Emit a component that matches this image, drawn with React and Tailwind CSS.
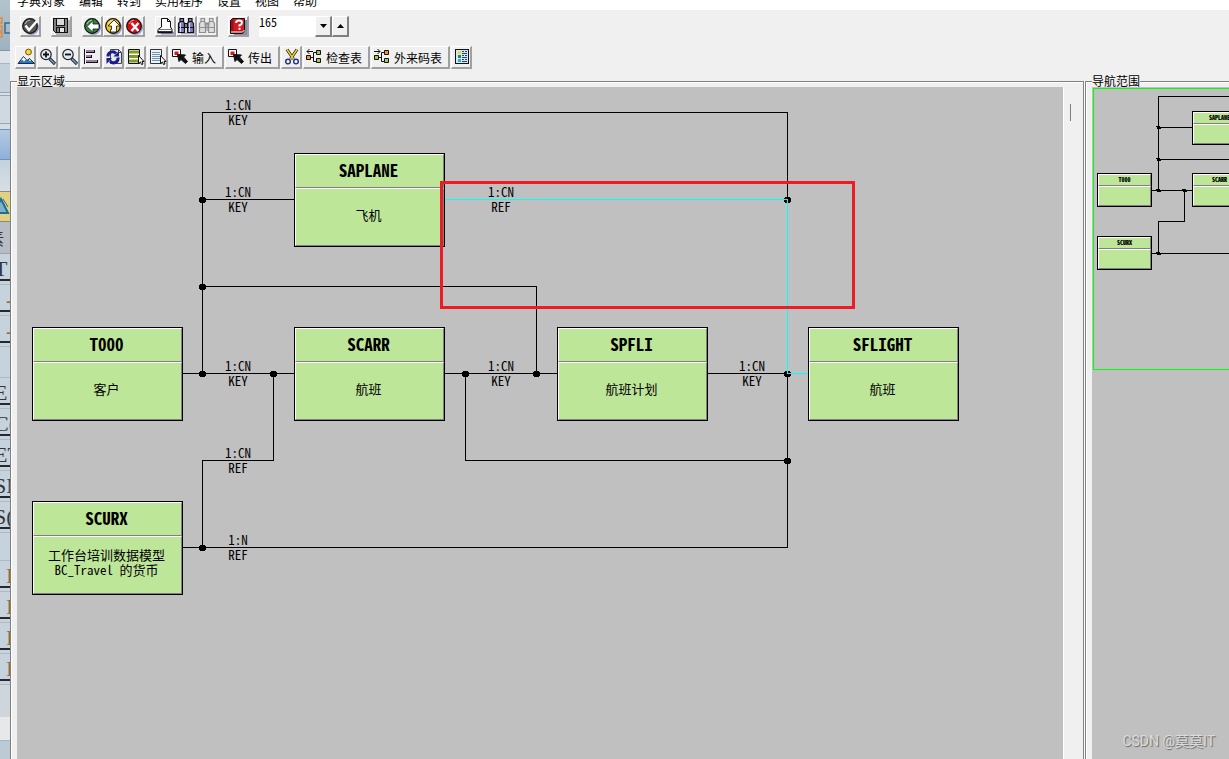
import clsx from "clsx";

const MENU = ["字典对象", "编辑", "转到", "实用程序", "设置", "视图", "帮助"];

const NODES = [
  { name: "SAPLANE", lines: ["飞机"], x: 277, y: 66 },
  { name: "T000", lines: ["客户"], x: 15, y: 240 },
  { name: "SCARR", lines: ["航班"], x: 277, y: 240 },
  { name: "SPFLI", lines: ["航班计划"], x: 540, y: 240 },
  { name: "SFLIGHT", lines: ["航班"], x: 791, y: 240 },
  { name: "SCURX", lines: ["工作台培训数据模型", "BC_Travel 的货币"], x: 15, y: 414 },
];

const LABELS = [
  { top: "1:CN", bottom: "KEY", x: 221, y: 25 },
  { top: "1:CN", bottom: "KEY", x: 221, y: 112 },
  { top: "1:CN", bottom: "REF", x: 484, y: 112 },
  { top: "1:CN", bottom: "KEY", x: 221, y: 286 },
  { top: "1:CN", bottom: "KEY", x: 484, y: 286 },
  { top: "1:CN", bottom: "KEY", x: 735, y: 286 },
  { top: "1:CN", bottom: "REF", x: 221, y: 373 },
  { top: "1:N", bottom: "REF", x: 221, y: 460 },
];

const DOTS = [
  [185, 112],
  [770, 112],
  [185, 199],
  [185, 286],
  [256, 286],
  [448, 286],
  [519, 286],
  [770, 286],
  [770, 373],
  [185, 460],
];

const MAP_NODES = [
  { name: "SAPLANE", x: 98, y: 22 },
  { name: "T000", x: 3, y: 84 },
  { name: "SCARR", x: 98, y: 84 },
  { name: "SCURX", x: 3, y: 147 },
];

const MAP_DOTS = [
  [64, 38],
  [64, 70],
  [64, 101],
  [90, 101],
  [64, 164],
];

// rows of the window that lies behind this one
const BACK_ROWS = [
  { text: "T" },
  { text: "-", end: true },
  { text: "-", end: true },
  { text: "" },
  { text: "E" },
  { text: "C(" },
  { text: "ET" },
  { text: "SM" },
  { text: "S(" },
  { text: "", short: true },
  { text: "I", end: true },
  { text: "I", end: true },
  { text: "I", end: true },
  { text: "I", end: true },
];

function Icon({ children, crisp }) {
  return (
    <svg
      viewBox="0 0 17 17"
      className="w-[17px] h-[17px] shrink-0 overflow-visible"
      shapeRendering={crisp ? "crispEdges" : "auto"}
      aria-hidden="true"
    >
      {children}
    </svg>
  );
}

function RoundIcon({ fill, children }) {
  return (
    <Icon>
      <circle cx="9.5" cy="9.5" r="7.5" fill="#9a9ac0" />
      <circle cx="8" cy="8" r="7.3" fill={fill} stroke="#111" strokeWidth="1.2" />
      <path d="M3 6a6 6 0 0 1 5-4" fill="none" stroke="#fff" strokeOpacity="0.6" />
      {children}
    </Icon>
  );
}

const CheckIcon = () => (
  <RoundIcon fill="#555">
    <path d="M3.5 7.5l3.5 4.5L15 3" fill="none" stroke="#fff" strokeWidth="2.4" />
  </RoundIcon>
);

const SaveIcon = () => (
  <Icon crisp>
    <path d="M3 2h14v15H3z" fill="#b4b4b4" />
    <path d="M0 0h15v15H2l-2-2z" fill="#111" />
    <path d="M1 1h13v13H2l-1-1z" fill="#808080" />
    <path d="M3 1h9v7H3z" fill="#111" />
    <path d="M4 1h7v6H4z" fill="#d8d8d8" />
    <path d="M3 9h9v5H3z" fill="#111" />
    <path d="M7 10h4v4H7z" fill="#e4e4e4" />
    <path d="M4 10h2v4H4z" fill="#808080" />
  </Icon>
);

const BackIcon = () => (
  <RoundIcon fill="#2f8a3e">
    <path d="M3 8.500l6-6v3.500h6v5H9v3.500z" fill="#fff" stroke="#111" strokeWidth="0.8" />
  </RoundIcon>
);

const ExitIcon = () => (
  <RoundIcon fill="#f5c518">
    <path d="M9 2l6 6h-3.500v6H5.500v-2.500h1V8H3z" fill="#fff" stroke="#111" strokeWidth="0.8" />
  </RoundIcon>
);

const CancelIcon = () => (
  <RoundIcon fill="#d80d18">
    <path d="M5.500 5l7 8M12.500 5l-7 8" stroke="#fff" strokeWidth="2.400" />
  </RoundIcon>
);

const PrintIcon = () => (
  <Icon>
    <path d="M4 14h13v2.500H4z" fill="#9a9ac0" />
    <path d="M4.500.500h6l3 3V10h-9z" fill="#fff" stroke="#111" />
    <path d="M10.500.500v3h3" fill="none" stroke="#111" />
    <path d="M4.500 9L1 11.500V14h14v-2.500L13.500 9" fill="#fff" stroke="#111" />
    <path d="M1 11.500h14" stroke="#777" />
    <path d="M.500 14.300h15" stroke="#111" strokeWidth="2" />
  </Icon>
);

function Binoculars({ fill, stroke }) {
  return (
    <g fill={fill} stroke={stroke} strokeWidth="1.2">
      <path d="M2 .500h3.500v3l1 2v9h-6v-9l1.500-2z" />
      <path d="M10.500.500H14v3l1.500 2v9h-6v-9l1-2z" />
      <path d="M6.500 5.500h3v4h-3z" />
      <path d="M.500 9.500h6M9.500 9.500h6M2 3.500h3.500M10.500 3.500H14" />
    </g>
  );
}

const FindIcon = () => (
  <Icon>
    <path d="M3 15.500h14V8" fill="none" stroke="#a8a8c4" strokeWidth="1.500" />
    <Binoculars fill="#8080b8" stroke="#111" />
    <path d="M2.500 5v9M11.500 5v9" stroke="#d8d8f0" />
  </Icon>
);

const FindNextIcon = () => (
  <Icon>
    <Binoculars fill="#dcdcdc" stroke="#8e8e8e" />
    <path d="M8 4v9M5.500 6h5" stroke="#8e8e8e" />
  </Icon>
);

const HelpIcon = () => (
  <Icon>
    <path d="M4 2h13v15H4z" fill="#7f90a4" />
    <path d="M.500 2.500l2-2h12v12l-2 3H.500z" fill="#a00d14" stroke="#111" />
    <path d="M3.500 1h10.500v11.500H3.500z" fill="#d81820" />
    <path d="M1 14h11.500l2-2" fill="none" stroke="#fff" />
    <path d="M6 5q0-2.500 3-2.500t3 2.200q0 1.600-2.500 2.600v1.200" fill="none" stroke="#fff" strokeWidth="2" />
    <path d="M8.500 9.800h2v2h-2z" fill="#fff" />
  </Icon>
);

const LandscapeIcon = () => (
  <Icon>
    <circle cx="10.500" cy="3" r="2.900" fill="#ffd52e" stroke="#6a5510" />
    <path d="M0 14.500L5.500 7.500l3.500 4L11.500 9.500l5 5z" fill="#2d76b8" stroke="#15304f" />
    <path d="M5.500 8l3 3.500-1.500-.5-1 2-1-2-2 .5zM11.500 10l2 2-2-.500-1 1z" fill="#fff" />
  </Icon>
);

function Magnifier({ children }) {
  return (
    <Icon>
      <path d="M9.500 9.500l5.500 5.500" stroke="#1c2b40" strokeWidth="3.200" />
      <path d="M10 10l4.500 4.500" stroke="#8ba8c8" strokeWidth="1.200" />
      <circle cx="6" cy="5.500" r="5.200" fill="#e2ebf4" stroke="#222" strokeWidth="1.200" />
      {children}
    </Icon>
  );
}

const ZoomInIcon = () => (
  <Magnifier>
    <path d="M3 5.500h6M6 2.500v6" stroke="#111" strokeWidth="1.800" />
  </Magnifier>
);

const ZoomOutIcon = () => (
  <Magnifier>
    <path d="M3 5.500h6" stroke="#111" strokeWidth="1.800" />
  </Magnifier>
);

const AlignIcon = () => (
  <Icon crisp>
    <path d="M0 0h1v15H0z" fill="#111" />
    <path d="M2 1h9v3H2zM2 6h6v3H2zM2 11h12v3H2z" fill="#111" />
    <path d="M2 1h8v2H2zM2 6h5v2H2zM2 11h11v2H2z" fill="#9a7ea4" />
  </Icon>
);

const RefreshIcon = () => (
  <Icon>
    <path d="M4.500.500h8l3 3v11h-11z" fill="#e4eaf2" stroke="#444" />
    <path d="M12.500.500v3h3" fill="none" stroke="#444" />
    <path d="M2 7.500a4.500 4.500 0 0 1 8-3" fill="none" stroke="#1b1b8e" strokeWidth="3" />
    <path d="M7.500 7.500h5.500V2z" fill="#1b1b8e" />
    <path d="M12 8.500a4.500 4.500 0 0 1-8 3.500" fill="none" stroke="#1b1b8e" strokeWidth="3" />
    <path d="M6 9H.500v6z" fill="#1b1b8e" />
  </Icon>
);

const Pointer = () => (
  <path d="M10.500 6.500v8l2-1.500 1 2.500 1.500-.500-1-2.500H16z" fill="#fff" stroke="#111" />
);

const SelectRowsIcon = () => (
  <Icon>
    <path d="M.500.500h11v14h-11z" fill="#fff" stroke="#111" />
    <path d="M1 1.500h10v3H1zM1 6h10v3H1zM1 10.500h10v3H1z" fill="#7c9c22" />
    <Pointer />
  </Icon>
);

const SelectTextIcon = () => (
  <Icon>
    <path d="M.500.500h11v14h-11z" fill="#edf3f8" stroke="#333" />
    <path d="M2 3.500h8M2 5.500h8M2 7.500h8M2 9.500h8M2 11.500h8" stroke="#6f96b4" />
    <Pointer />
  </Icon>
);

const TargetIcon = () => (
  <Icon>
    <path d="M.500.500h8v7h-8z" fill="#fff" stroke="#111" />
    <path d="M2.500 2.500h4V6h-4z" fill="#e01818" />
    <path d="M5.500 5.500l8 .500-2 2 4 4.500-2 2-4.500-4-2 2z" fill="#111" stroke="#111" />
  </Icon>
);

const CutIcon = () => (
  <Icon>
    <path d="M3 .500L9.500 10M13 .500L6.500 10" stroke="#111" strokeWidth="3" />
    <path d="M3 .500L9.500 10M13 .500L6.500 10" stroke="#f2d23a" strokeWidth="1.500" />
    <circle cx="4" cy="12.500" r="2.300" fill="#fff" stroke="#26348f" strokeWidth="1.500" />
    <circle cx="12" cy="12.500" r="2.300" fill="#fff" stroke="#26348f" strokeWidth="1.500" />
  </Icon>
);

function TreeIcon({ first, second, arrow }) {
  return (
    <Icon>
      <path d="M5 8.500h3M7.500 3.500v9M7.500 3.500H10M7.500 12.500H10" fill="none" stroke="#111" />
      <path d="M.500 6.500h4v4h-4z" fill={first} stroke="#111" />
      <path d="M10.500 1.500h4v4h-4z" fill={second} stroke="#111" />
      <path d="M10.500 9.500h4v4h-4z" fill="#a9c94c" stroke="#111" />
      <path d={arrow} fill="none" stroke="#111" />
    </Icon>
  );
}

const CheckTableIcon = () => (
  <TreeIcon first="#f39a1e" second="#a9c94c" arrow="M1 2.500h6M3.500 0L1 2.500l2.500 2.500" />
);

const ForeignIcon = () => (
  <TreeIcon first="#a9c94c" second="#f39a1e" arrow="M0 2.500h6M3.500 0L6 2.500 3.500 5" />
);

const LegendIcon = () => (
  <Icon crisp>
    <path d="M1 0h14v15H1z" fill="#111" />
    <path d="M2 1h12v13H2z" fill="#d5e7f5" />
    <path d="M4 2h3v3H4z" fill="#e8dc3c" />
    <path d="M4 6h3v3H4z" fill="#2c8a3c" />
    <path d="M4 10h3v3H4z" fill="#35a8d8" />
    <path
      d="M8 2h2v1H8zM11 2h2v1h-2zM8 4h5v1H8zM8 6h2v1H8zM11 6h2v1h-2zM8 8h5v1H8zM8 10h2v1H8zM11 10h2v1h-2zM8 12h5v1H8z"
      fill="#26445f"
    />
  </Icon>
);

const TOP_GROUPS = [
  [{ label: "回车", icon: CheckIcon }],
  [{ label: "保存", icon: SaveIcon }],
  [
    { label: "返回", icon: BackIcon },
    { label: "退出", icon: ExitIcon },
    { label: "取消", icon: CancelIcon },
  ],
  [
    { label: "打印", icon: PrintIcon },
    { label: "查找", icon: FindIcon },
    { label: "查找下一个", icon: FindNextIcon },
  ],
  [{ label: "帮助", icon: HelpIcon }],
];

const TOOLS = [
  { label: "概览", icon: LandscapeIcon },
  { label: "放大", icon: ZoomInIcon },
  { label: "缩小", icon: ZoomOutIcon },
  { label: "对齐", icon: AlignIcon },
  { label: "刷新", icon: RefreshIcon },
  { label: "选择表", icon: SelectRowsIcon },
  { label: "选择文本", icon: SelectTextIcon },
  { text: "输入", icon: TargetIcon },
  { text: "传出", icon: TargetIcon },
  { label: "剪切", icon: CutIcon },
  { text: "检查表", icon: CheckTableIcon },
  { text: "外来码表", icon: ForeignIcon },
  { label: "图例", icon: LegendIcon },
];

function ToolButton({ label, text, icon: IconComponent, tall }) {
  return (
    <button
      type="button"
      aria-label={label}
      className={clsx(
        "flex items-center gap-[3px] bg-[#f0f0f0] border-t border-l border-r-2 border-b-2 border-t-white border-l-white border-r-[#a0a0a0] border-b-[#a0a0a0]",
        tall ? "h-[23px] pl-0.5" : "h-[21px] pl-px",
        text ? "pr-1.5" : "w-[21px]"
      )}
    >
      <IconComponent />
      {text && <span className="pt-0.5 text-xs leading-4 whitespace-nowrap">{text}</span>}
    </button>
  );
}

function SpinButton({ label, path }) {
  return (
    <button
      type="button"
      aria-label={label}
      className="w-[17px] h-[21px] flex items-center justify-center bg-[#f0f0f0] border-t border-l border-r-2 border-b-2 border-t-white border-l-white border-r-[#808080] border-b-[#808080]"
    >
      <svg width="7" height="4" viewBox="0 0 7 4" aria-hidden="true">
        <path d={path} fill="#000" />
      </svg>
    </button>
  );
}

function Dots({ points, small }) {
  return points.map(([x, y]) => (
    <path
      key={`${x}-${y}`}
      transform={`translate(${x} ${y})`}
      d={small ? "M-1 -1h3v1h1v2h-4v-2h-1v-1z" : "M-2 -2h5v1h1v4h-1v1h-5v-1h-1v-4h1z"}
      fill="#000"
    />
  ));
}

function TableNode({ name, lines, x, y }) {
  return (
    <div
      className="absolute w-[151px] h-[94px] flex flex-col border border-black bg-[#bee699]"
      style={{ left: x, top: y }}
    >
      <h3 className="h-[34px] pr-0.5 pb-0.5 flex items-center justify-center border border-t-white border-l-white border-r-[#808080] border-b-[#808080] text-[17px] leading-5 font-bold">
        {name}
      </h3>
      <div className="flex-1 pr-0.5 pb-1.5 flex flex-col items-center justify-center border border-t-white border-l-white border-r-[#808080] border-b-[#808080] text-[13px] leading-[15px] whitespace-nowrap">
        {lines.map((line) => (
          <p key={line}>{line}</p>
        ))}
      </div>
    </div>
  );
}

function RelationLabel({ top, bottom, x, y }) {
  return (
    <div
      className="absolute w-10 text-center text-[13px] leading-[15px]"
      style={{ left: x - 20, top: y - 15 }}
    >
      <p>{top}</p>
      <p>{bottom}</p>
    </div>
  );
}

function Diagram() {
  return (
    <div className="relative flex-1 min-w-0 overflow-hidden bg-[#c0c0c0] border-r border-white">
      <svg className="absolute inset-0 w-full h-full" shapeRendering="crispEdges" aria-hidden="true">
        <g transform="translate(0.5 0.5)" fill="none" stroke="#000">
          <path d="M185 286V25H770V112M185 112H277M185 199H519V286M165 286H277" />
          <path d="M256 286V373H185V460M165 460H770V286M427 286H540M448 286V373H770M690 286H770" />
        </g>
        <Dots points={DOTS} />
        <path
          transform="translate(0.5 0.5)"
          d="M427 112H770V286H791"
          fill="none"
          stroke="#00ffff"
        />
      </svg>
      {NODES.map((node) => (
        <TableNode key={node.name} {...node} />
      ))}
      {LABELS.map((label) => (
        <RelationLabel key={`${label.x}-${label.y}`} {...label} />
      ))}
      {/* highlighted relation */}
      <div className="absolute left-[423px] top-[94px] w-[415px] h-32 border-3 border-[#ed1c24]" />
    </div>
  );
}

function Navigator() {
  return (
    <div className="flex-1 flex flex-col pl-px pt-px bg-[#c0c0c0] overflow-hidden">
      <div className="relative h-[282px] overflow-hidden border border-r-0 border-[#00ff00]">
        <svg className="absolute inset-0 w-full h-full" shapeRendering="crispEdges" aria-hidden="true">
          <path
            transform="translate(0.5 0.5)"
            d="M64 101V7H300M64 38H98M64 70H300M57 101H98M90 101V132H64V164M57 164H300"
            fill="none"
            stroke="#000"
          />
          <Dots points={MAP_DOTS} small />
        </svg>
        {MAP_NODES.map((node) => (
          <div
            key={node.name}
            className="absolute w-[55px] h-[34px] flex flex-col border border-black bg-[#bee699]"
            style={{ left: node.x, top: node.y }}
          >
            <p className="h-3 flex items-center justify-center border border-t-white border-l-white border-r-[#808080] border-b-[#808080] text-[6px] leading-[8px] font-black">
              {node.name}
            </p>
            <div className="flex-1 border border-t-white border-l-white border-r-[#808080] border-b-[#808080]" />
          </div>
        ))}
      </div>
      <p className="mt-auto mb-2 pr-3.5 text-right text-sm leading-5 whitespace-nowrap text-[#dcdcdc] [text-shadow:1px_1px_1px_#666] font-[Roboto,'Noto_Sans_CJK_SC',sans-serif] [font-feature-settings:normal]">
        CSDN @莫莫IT
      </p>
    </div>
  );
}

function BackWindow() {
  return (
    <div
      aria-hidden="true"
      className="w-2.5 shrink-0 overflow-hidden bg-[#c6d2dc] text-[#34363c] font-['Liberation_Serif',serif] text-[22px] [font-feature-settings:normal]"
    >
      <div className="h-[51px] pt-[17px] bg-linear-to-b from-[#b4c4ce] to-[#9fb2c0] border-b border-[#8496a4]">
        <svg width="10" height="22" viewBox="0 0 10 22">
          <path d="M0 1h2v5H0M0 9h2v5H0M0 16h2v4H0" fill="none" stroke="#e08a3c" strokeWidth="1.500" />
          <path d="M10 6H5v10h5" fill="none" stroke="#2f6f98" strokeWidth="1.500" />
        </svg>
      </div>
      <div className="h-[13px] bg-[#dde3e8] border-b border-[#a9b6c0]" />
      <div className="h-7 bg-[#c4d0da]" />
      <div className="h-1 border-y border-[#9aa6b0] bg-[#d8e0e6]" />
      <div className="h-7 bg-[#cfd9e0] border-b border-[#9aa6b0]" />
      <div className="h-[5px] bg-[#d3dde4]" />
      <div className="h-[31px] bg-linear-to-b from-[#b4c9e2] to-[#8fb0d8] border-y border-[#6f93bd]" />
      <div className="h-[31px] bg-linear-to-b from-[#c4d2de] to-[#d6dfe5]" />
      <div className="h-[31px] bg-[#e2d181] border-y border-[#8c8a7c]">
        <svg width="10" height="29" viewBox="0 0 10 29">
          <path d="M-6 21L1 7l7 14z" fill="#7fb0cc" stroke="#1f6f94" strokeWidth="2" />
          <path d="M1 7l7 14M3 7l5 8" stroke="#1f6f94" />
        </svg>
      </div>
      <div className="h-8 flex items-center justify-end pr-1.5 bg-[#b9bcc2] border-b border-[#9aa3ad] text-base leading-5 font-['Noto_Sans_CJK_SC',sans-serif]">
        素
      </div>
      {BACK_ROWS.map((row, i) => (
        <div
          key={i}
          className={clsx("pt-[3px] border-b border-[#aeb9c4]", row.short ? "h-7" : "h-[31px]")}
        >
          {row.text && (
            <div
              className={clsx(
                "h-6 leading-6 flex border-b-2 border-[#26282e]",
                row.end && "pl-1.5 text-[#8f6a42]"
              )}
            >
              <span className={row.end ? "" : "-ml-1.5"}>{row.text}</span>
            </div>
          )}
        </div>
      ))}
      <div className="h-8 bg-[#cfd6db]" />
      <div className="h-6 bg-[#e6e8ea] border-b border-[#9db8d4]" />
      <div className="h-12 bg-[#bccad6]" />
    </div>
  );
}

export default function App() {
  return (
    <div className="h-screen flex overflow-hidden bg-[#f0f0f0] text-black font-['Noto_Sans_CJK_SC',sans-serif] [font-feature-settings:'hwid']">
      <BackWindow />

      <div className="flex-1 min-w-0 flex flex-col">
        <nav className="h-2.5 pl-[7px] pb-px flex items-end gap-3.5 overflow-hidden bg-white text-xs leading-4">
          {MENU.map((item) => (
            <a key={item} href="#" className="whitespace-nowrap">
              {item}
            </a>
          ))}
        </nav>

        {/* Standard toolbar */}
        <div className="mt-1.5 pl-2.5 flex gap-2.5">
          {TOP_GROUPS.map((group, i) => (
            <div key={i} className="flex">
              {group.map((item) => (
                <ToolButton key={item.label} {...item} />
              ))}
            </div>
          ))}
          <div className="flex">
            <input
              type="text"
              aria-label="缩放"
              defaultValue="165"
              className="w-14 h-[21px] pb-2.5 bg-white text-xs leading-3 outline-none"
            />
            <SpinButton label="减小" path="M0 0h7L3.500 4z" />
            <SpinButton label="增大" path="M0 4h7L3.500 0z" />
          </div>
        </div>

        {/* Application toolbar */}
        <div className="mt-[9px] pl-[5px] flex gap-px">
          {TOOLS.map((item) => (
            <ToolButton key={item.label || item.text} {...item} tall />
          ))}
        </div>

        <div className="mt-1.5 flex-1 min-h-0 flex gap-px">
          <fieldset className="flex-1 min-w-0 flex pl-1.5 pr-[19px] border border-b-0 border-[#808080] shadow-[inset_1px_1px_0_#fff,1px_0_0_#fff]">
            <legend className="h-3 bg-[#f0f0f0] text-xs leading-3">显示区域</legend>
            <Diagram />
            {/* splitter grip */}
            <div className="relative">
              <div className="absolute left-1.5 top-[17px] w-px h-[17px] bg-[#808080]" />
            </div>
          </fieldset>

          <fieldset className="w-36 shrink-0 min-w-0 flex pl-1.5 border border-b-0 border-r-0 border-[#808080] shadow-[inset_1px_1px_0_#fff]">
            <legend className="h-3 bg-[#f0f0f0] text-xs leading-3">导航范围</legend>
            <Navigator />
          </fieldset>
        </div>
      </div>
    </div>
  );
}
